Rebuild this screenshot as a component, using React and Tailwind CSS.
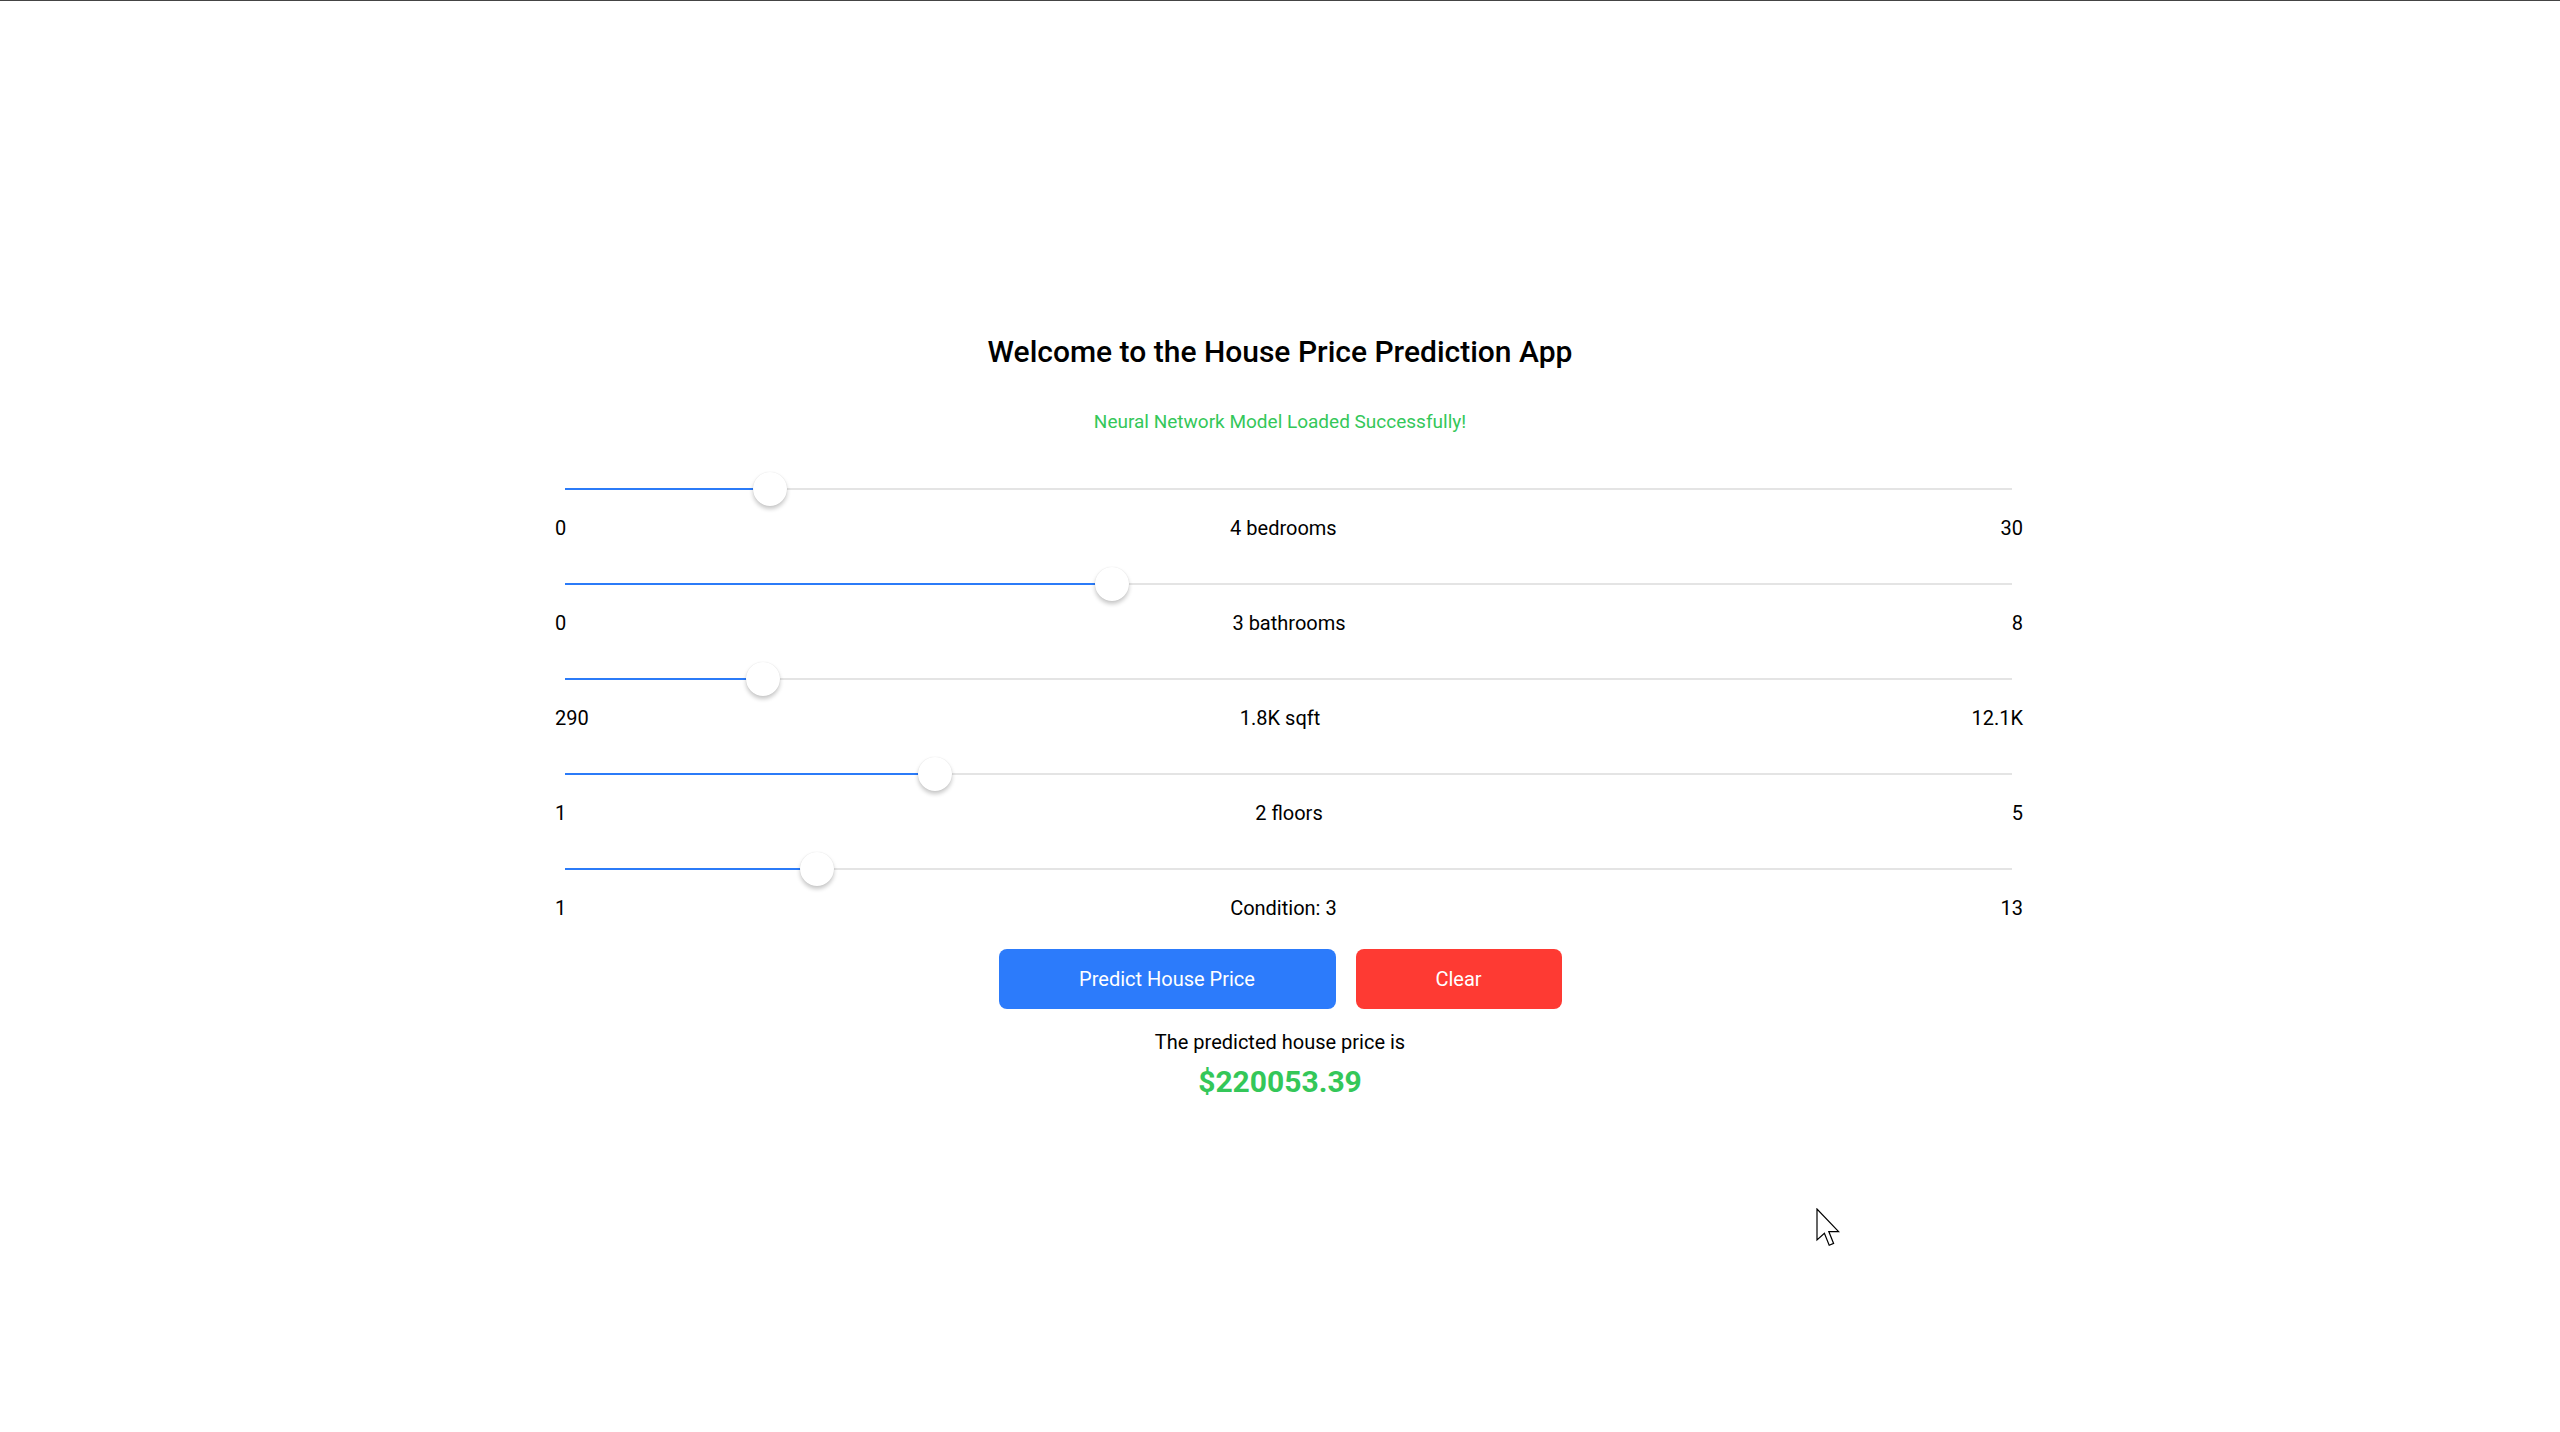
import { useState } from "react";

const SLIDERS = [
  { min: 0, max: 30, value: 4, left: "0", right: "30", label: (v) => `${v} bedrooms` },
  { min: 0, max: 8, value: 3, left: "0", right: "8", label: (v) => `${v} bathrooms` },
  { min: 290, max: 12100, value: 1800, left: "290", right: "12.1K", label: () => "1.8K sqft" },
  { min: 1, max: 5, value: 2, left: "1", right: "5", label: (v) => `${v} floors` },
  { min: 1, max: 13, value: 3, left: "1", right: "13", label: (v) => `Condition: ${v}` },
];

function Slider({ min, max, value, left, right, label }) {
  const frac = (value - min) / (max - min);
  // thumb travels inside the track, 17px in from each end
  const pos = `calc(17px + ${frac} * (100% - 34px))`;
  return (
    <div className="flex flex-col">
      <div className="relative h-[34px] mx-[10px] mr-[11px]">
        <div className="absolute left-0 right-0 top-[16px] h-[2px] bg-[#e4e4e4]" />
        <div className="absolute left-0 top-[16px] h-[2px] bg-[#2b7bf8]" style={{ width: pos }} />
        <div
          className="absolute top-0 w-[34px] h-[34px] -ml-[17px] rounded-full bg-white shadow-[0_3px_4px_rgba(0,0,0,0.22),0_0_1px_rgba(0,0,0,0.12)]"
          style={{ left: pos }}
        />
      </div>
      <div className="flex items-center justify-between mt-[10px] text-[20px] leading-[24px] text-black">
        <span>{left}</span>
        <span>{label(value)}</span>
        <span>{right}</span>
      </div>
    </div>
  );
}

export default function App() {
  const [price, setPrice] = useState("220053.39");

  return (
    <div className="relative min-h-[1432px] bg-white border-t border-[#444] font-['Roboto',sans-serif]">
      <div className="flex flex-col items-center pt-[333px]">
        <h1 className="text-[30px] leading-[36px] font-medium text-black">Welcome to the House Price Prediction App</h1>
        <p className="mt-[40px] text-[19px] leading-[24px] text-[#34c759]">Neural Network Model Loaded Successfully!</p>

        <div className="w-[1486px] pl-[18px] mt-[38px] flex flex-col gap-[27px]">
          {SLIDERS.map((s, i) => (
            <Slider key={i} {...s} />
          ))}
        </div>

        <div className="flex gap-[20px] mt-[29px]">
          <button className="w-[337px] h-[60px] rounded-[8px] bg-[#2c7bfb] text-white text-[20px]">
            Predict House Price
          </button>
          <button onClick={() => setPrice("")} className="w-[206px] h-[60px] rounded-[8px] bg-[#fe3a33] text-white text-[20px]">
            Clear
          </button>
        </div>

        <p className="mt-[21px] text-[20px] leading-[24px] text-black">The predicted house price is</p>
        <p className="mt-[10px] text-[30px] leading-[36px] font-bold text-[#34c759]">${price}</p>
      </div>

      <svg className="absolute left-[1816px] top-[1207px]" width="26" height="40" viewBox="0 0 13 20">
        <path d="M0.5 0.5 L0.5 16 L4.2 12.6 L6.6 18.6 L8.8 17.7 L6.4 11.8 L11.3 11.8 Z" fill="white" stroke="black" strokeWidth="0.6" strokeLinejoin="miter" />
      </svg>
    </div>
  );
}
